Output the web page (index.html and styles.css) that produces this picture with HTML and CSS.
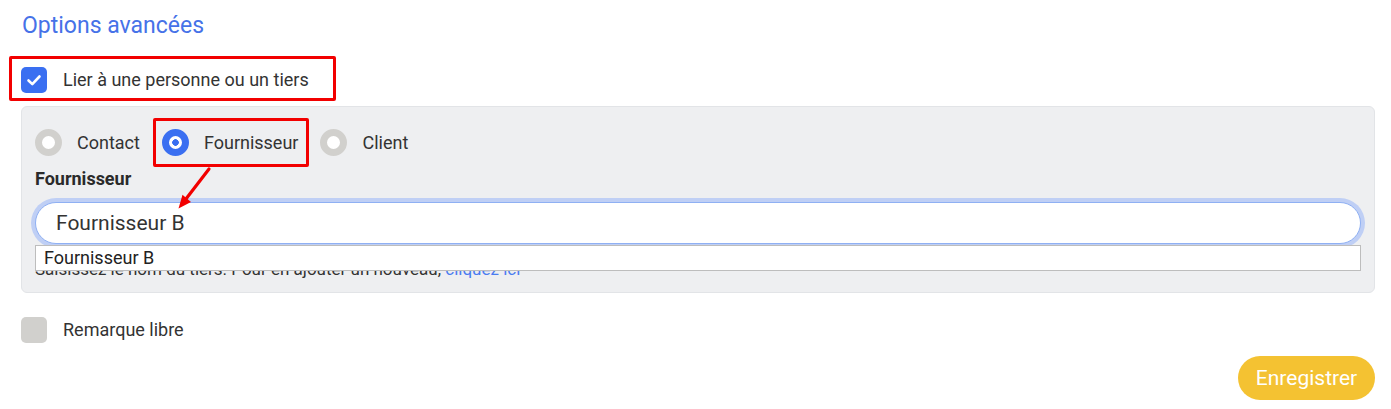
FILE: index.html
```html
<!DOCTYPE html>
<html lang="fr">
<head>
<meta charset="utf-8">
<title>Options avancées</title>
<link rel="stylesheet" href="styles.css">
</head>
<body>
<div class="page">
  <h2 class="title">Options avancées</h2>

  <label class="check-row annotated">
    <span class="checkbox checked">
      <svg viewBox="0 0 26 26" width="26" height="26"><path d="M7.5 13.5l3.8 3.6 7.2-7.6" fill="none" stroke="#fff" stroke-width="2.6" stroke-linecap="round" stroke-linejoin="round"/></svg>
    </span>
    <span class="check-label">Lier à une personne ou un tiers</span>
    <span class="red-box box-1"></span>
  </label>

  <div class="panel">
    <div class="radios">
      <label class="radio-item"><span class="radio"></span><span class="radio-label">Contact</span></label>
      <label class="radio-item"><span class="radio on"></span><span class="radio-label">Fournisseur</span><span class="red-box box-2"></span></label>
      <label class="radio-item"><span class="radio"></span><span class="radio-label">Client</span></label>
    </div>
    <div class="field-label">Fournisseur</div>
    <div class="input-wrap">
      <div class="input">Fournisseur B</div>
      <div class="dropdown">Fournisseur B</div>
    </div>
    <div class="help">Saisissez le nom du tiers. Pour en ajouter un nouveau, <span class="link">cliquez ici</span></div>
    <svg class="arrow" viewBox="0 0 50 50" width="50" height="50">
      <line x1="37" y1="7" x2="14.5" y2="36.3" stroke="#f20000" stroke-width="3.2" stroke-linecap="round"/>
      <polygon points="6.5,46.5 19,40 10.5,32.8" fill="#f20000"/>
    </svg>
  </div>

  <label class="check-row remark">
    <span class="checkbox"></span>
    <span class="check-label">Remarque libre</span>
  </label>

  <div class="actions">
    <button class="btn">Enregistrer</button>
  </div>
</div>
</body>
</html>
```

FILE: styles.css
```css
html, body {
  margin: 0;
  padding: 0;
  background: #ffffff;
}

body {
  font-family: Roboto, "Noto Sans", Arial, sans-serif;
  color: #333333;
}

.page {
  padding: 13px 16px 0 21px;
}

.title {
  margin: 0;
  font-size: 23px;
  line-height: 26px;
  font-weight: 400;
  color: #4672e8;
  padding-left: 1px;
}

.check-row {
  display: flex;
  align-items: center;
  gap: 16px;
  height: 26px;
  position: relative;
  width: max-content;
}

.check-row.annotated {
  margin-top: 28px;
}

.checkbox {
  width: 26px;
  height: 26px;
  border-radius: 5px;
  background: #d1d0cd;
  display: block;
  flex: none;
}

.checkbox.checked {
  background: #3a6ff1;
}

.checkbox svg {
  display: block;
}

.check-label {
  font-size: 18px;
  line-height: 20px;
  color: #333333;
}

.red-box {
  position: absolute;
  border: 3.5px solid #f20000;
  border-radius: 2px;
  pointer-events: none;
}

.box-1 {
  left: -12px;
  top: -11px;
  bottom: -8px;
  right: -27px;
}

.panel {
  position: relative;
  margin-top: 13px;
  background: #eeeff1;
  border: 1px solid #e2e4e7;
  border-radius: 6px;
  padding: 22px 13px 11px 13px;
}

.radios {
  display: flex;
  align-items: center;
  gap: 22px;
  height: 27px;
}

.radio-item {
  position: relative;
  display: flex;
  align-items: center;
  gap: 15px;
}

.radio {
  width: 27px;
  height: 27px;
  box-sizing: border-box;
  border-radius: 50%;
  border: 7px solid #d1d0cd;
  background: #ffffff;
  display: block;
  flex: none;
}

.radio.on {
  border-color: #3a6ff1;
  background: radial-gradient(circle, #3a6ff1 0 3px, #ffffff 3.6px);
}

.radio-label {
  font-size: 18px;
  line-height: 20px;
}

.box-2 {
  left: -8.5px;
  right: -11px;
  top: -11px;
  bottom: -11px;
}

.field-label {
  margin-top: 13px;
  font-size: 18px;
  line-height: 20px;
  font-weight: 700;
  color: #2a2a2a;
}

.input-wrap {
  position: relative;
  margin-top: 13px;
}

.input {
  height: 42px;
  box-sizing: border-box;
  border: 1px solid #8fb0f3;
  border-radius: 21px;
  background: #ffffff;
  box-shadow: 0 0 0 4px #bfcff5;
  padding: 0 20px;
  font-size: 21px;
  line-height: 40px;
  color: #333333;
}

.dropdown {
  position: absolute;
  left: 0;
  right: 0;
  top: 43px;
  height: 26px;
  box-sizing: border-box;
  border: 1px solid #bdbdbd;
  background: #ffffff;
  padding: 0 8px;
  font-size: 18px;
  line-height: 23px;
  color: #222222;
  z-index: 2;
}

.help {
  margin-top: 13px;
  font-size: 17px;
  line-height: 24px;
  color: #333333;
}

.link {
  color: #4a7cf0;
}

.arrow {
  position: absolute;
  left: 150px;
  top: 55px;
  z-index: 3;
}

.check-row.remark {
  margin-top: 24px;
}

.actions {
  display: flex;
  justify-content: flex-end;
  margin-top: 13px;
}

.btn {
  height: 44px;
  width: 137px;
  border: none;
  border-radius: 22px;
  background: #f4c232;
  color: #ffffff;
  font-family: Roboto, "Noto Sans", Arial, sans-serif;
  font-size: 21px;
  padding: 0;
  cursor: pointer;
}
```
